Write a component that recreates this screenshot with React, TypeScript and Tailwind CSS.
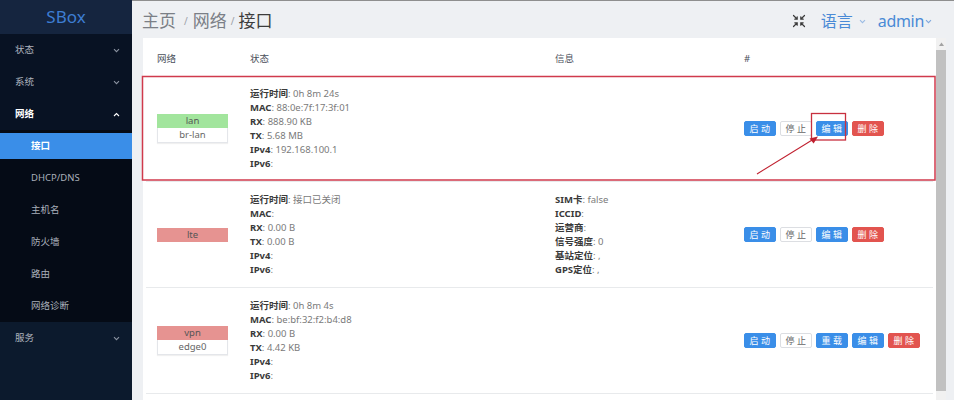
import React from "react";

const FONT = { fontFamily: '"Noto Sans", "Noto Sans CJK SC", sans-serif' };

function Chevron({ up = false, className = "" }: { up?: boolean; className?: string }) {
  return (
    <svg width="7" height="5" viewBox="0 0 7 5" className={className}>
      <path d={up ? "M1 4 L3.5 1.5 L6 4" : "M1 1.2 L3.5 3.7 L6 1.2"} fill="none" stroke="currentColor" strokeWidth="1.1" />
    </svg>
  );
}

function SideItem({ label, open, chevron, bold }: { label: string; open?: boolean; chevron?: boolean; bold?: boolean }) {
  return (
    <div className={`flex h-[32px] items-center justify-between pl-[15px] pr-[12px] text-[9.5px] ${bold ? "font-semibold text-white" : "text-[#aeb4bf]"}`}>
      <span>{label}</span>
      {chevron && <Chevron up={open} className={bold ? "text-white" : "text-[#8b93a1]"} />}
    </div>
  );
}

function SubItem({ label, active }: { label: string; active?: boolean }) {
  return (
    <div className="h-[32px] py-[3px]">
      <div className={`flex h-full items-center pl-[31px] text-[9.5px] ${active ? "bg-[#3a8ee8] text-white font-semibold" : "text-[#a9afba]"}`}>
        {label}
      </div>
    </div>
  );
}

function Line({ k, v }: { k: string; v: string }) {
  return (
    <div className="h-[14px] leading-[14px] whitespace-nowrap">
      <span className="font-bold text-[#3a3a3a]">{k}</span>
      <span className="text-[#7a7a7a]">: {v}</span>
    </div>
  );
}

function Btn({ label, kind }: { label: string; kind: "blue" | "white" | "red" }) {
  const cls =
    kind === "blue"
      ? "bg-[#3a8ee8] text-white border-[#3a8ee8]"
      : kind === "red"
      ? "bg-[#e2544f] text-white border-[#e2544f]"
      : "bg-white text-[#666] border-[#dcdee2]";
  return (
    <div className={`flex h-[15px] w-[32px] items-center justify-center rounded-[2px] border text-[9px] tracking-[2.5px] pl-[2px] ${cls}`}>
      {label}
    </div>
  );
}

function Badge({ name, color, dev }: { name: string; color: string; dev?: string }) {
  return (
    <div className="w-[71px] text-center text-[9.5px]">
      <div className={`h-[14px] leading-[14px] text-[#555] ${color}`}>{name}</div>
      {dev && (
        <div className="h-[15px] leading-[14px] border border-t-0 border-[#e4e6ea] bg-white text-[#666] shadow-[0_1px_1px_rgba(0,0,0,0.06)]">{dev}</div>
      )}
    </div>
  );
}

const GRID = "grid grid-cols-[104px_305px_189px_1fr] items-center";

export default function App() {
  return (
    <div className="relative flex h-[400px] w-[954px] overflow-hidden" style={FONT}>
      {/* Sidebar */}
      <aside className="flex w-[132px] shrink-0 flex-col bg-[#0c1a2d]">
        <div className="flex h-[34px] items-center justify-center bg-[#15253f] text-[17px] text-[#3d7dd2]">SBox</div>
        <div className="bg-[#081223]">
          <SideItem label="状态" chevron />
          <SideItem label="系统" chevron />
          <SideItem label="网络" chevron open bold />
        </div>
        <div className="bg-[#050b16]">
          <SubItem label="接口" active />
          <SubItem label="DHCP/DNS" />
          <SubItem label="主机名" />
          <SubItem label="防火墙" />
          <SubItem label="路由" />
          <SubItem label="网络诊断" />
        </div>
        <SideItem label="服务" chevron />
      </aside>

      {/* Main */}
      <main className="flex min-w-0 flex-1 flex-col border-t border-[#8e8e8e] bg-[#eef0f3]">
        <header className="flex h-[37px] shrink-0 items-center justify-between pl-[10px] pr-[22px] pt-[3px]">
          <div className="flex items-center text-[17px]">
            <span className="text-[#7b7f86]">主页</span>
            <span className="ml-[8px] mr-[5px] text-[10px] text-[#9aa0a8]">/</span>
            <span className="text-[#7b7f86]">网络</span>
            <span className="mx-[4px] text-[10px] text-[#9aa0a8]">/</span>
            <span className="text-[#3c3c3c]">接口</span>
          </div>
          <div className="flex items-center text-[16px] text-[#4a8ad6]">
            <svg width="14" height="14" viewBox="0 0 14 14" className="mr-[15px] text-[#3a3a3a]">
              <g fill="none" stroke="currentColor" strokeWidth="1.2" strokeLinecap="round">
                <path d="M1.5 1.5 L5 5 M5.2 2.8 V5.2 H2.8" />
                <path d="M12.5 1.5 L9 5 M8.8 2.8 V5.2 H11.2" />
                <path d="M1.5 12.5 L5 9 M5.2 11.2 V8.8 H2.8" />
                <path d="M12.5 12.5 L9 9 M8.8 11.2 V8.8 H11.2" />
              </g>
            </svg>
            <span>语言</span>
            <Chevron className="ml-[6px] mr-[12px] text-[#9bbbe4]" />
            <span className="tracking-[-0.3px]">admin</span>
            <Chevron className="ml-[1px] text-[#7fa8de]" />
          </div>
        </header>

        <div className="flex min-h-0 flex-1 pl-[11px] pr-[8px]">
          {/* Card */}
          <div className="min-w-0 flex-1 bg-white px-[3px]">
            <div className={`${GRID} h-[38px] pt-[4px] text-[9.5px] text-[#4a4f5a]`}>
              <div className="pl-[11px]">网络</div>
              <div>状态</div>
              <div>信息</div>
              <div>#</div>
            </div>

            {/* Row 1 */}
            <div className={`${GRID} h-[106px] border-b border-[#e8eaec] text-[9.5px]`}>
              <div className="pl-[11px]">
                <Badge name="lan" color="bg-[#a2e59d]" dev="br-lan" />
              </div>
              <div>
                <Line k="运行时间" v="0h 8m 24s" />
                <Line k="MAC" v="88:0e:7f:17:3f:01" />
                <Line k="RX" v="888.90 KB" />
                <Line k="TX" v="5.68 MB" />
                <Line k="IPv4" v="192.168.100.1" />
                <Line k="IPv6" v="" />
              </div>
              <div />
              <div className="flex gap-[4px]">
                <Btn label="启动" kind="blue" />
                <Btn label="停止" kind="white" />
                <Btn label="编辑" kind="blue" />
                <Btn label="删除" kind="red" />
              </div>
            </div>

            {/* Row 2 */}
            <div className={`${GRID} h-[106px] border-b border-[#e8eaec] text-[9.5px]`}>
              <div className="pl-[11px]">
                <Badge name="lte" color="bg-[#e69391]" />
              </div>
              <div>
                <Line k="运行时间" v="接口已关闭" />
                <Line k="MAC" v="" />
                <Line k="RX" v="0.00 B" />
                <Line k="TX" v="0.00 B" />
                <Line k="IPv4" v="" />
                <Line k="IPv6" v="" />
              </div>
              <div>
                <Line k="SIM卡" v="false" />
                <Line k="ICCID" v="" />
                <Line k="运营商" v="" />
                <Line k="信号强度" v="0" />
                <Line k="基站定位" v="," />
                <Line k="GPS定位" v="," />
              </div>
              <div className="flex gap-[4px]">
                <Btn label="启动" kind="blue" />
                <Btn label="停止" kind="white" />
                <Btn label="编辑" kind="blue" />
                <Btn label="删除" kind="red" />
              </div>
            </div>

            {/* Row 3 */}
            <div className={`${GRID} h-[106px] border-b border-[#e8eaec] text-[9.5px]`}>
              <div className="pl-[11px]">
                <Badge name="vpn" color="bg-[#e69391]" dev="edge0" />
              </div>
              <div>
                <Line k="运行时间" v="0h 8m 4s" />
                <Line k="MAC" v="be:bf:32:f2:b4:d8" />
                <Line k="RX" v="0.00 B" />
                <Line k="TX" v="4.42 KB" />
                <Line k="IPv4" v="" />
                <Line k="IPv6" v="" />
              </div>
              <div />
              <div className="flex gap-[4px]">
                <Btn label="启动" kind="blue" />
                <Btn label="停止" kind="white" />
                <Btn label="重载" kind="blue" />
                <Btn label="编辑" kind="blue" />
                <Btn label="删除" kind="red" />
              </div>
            </div>
          </div>

          {/* Scrollbar */}
          <div className="flex w-[10px] shrink-0 flex-col bg-[#f1f1f1]">
            <div className="flex h-[12px] items-center justify-center">
              <svg width="5" height="4" viewBox="0 0 5 4">
                <path d="M0 4 L2.5 0.5 L5 4 Z" fill="#a3a3a3" />
              </svg>
            </div>
            <div className="h-[341px] bg-[#c1c1c1]" />
          </div>
        </div>
      </main>

      {/* Annotation overlay */}
      <svg className="pointer-events-none absolute left-0 top-0" width="954" height="400" viewBox="0 0 954 400">
        <rect x="142.5" y="76.5" width="792.5" height="103.5" fill="none" stroke="#d03a4c" strokeWidth="1.5" />
        <rect x="811.5" y="113.5" width="34" height="26.5" fill="none" stroke="#c8303f" strokeWidth="1.3" />
        <line x1="757" y1="174" x2="813" y2="139.5" stroke="#c0202f" strokeWidth="1.1" />
        <path d="M818 136.5 L809.5 138.6 L813.6 143.6 Z" fill="#c0202f" />
      </svg>
    </div>
  );
}
